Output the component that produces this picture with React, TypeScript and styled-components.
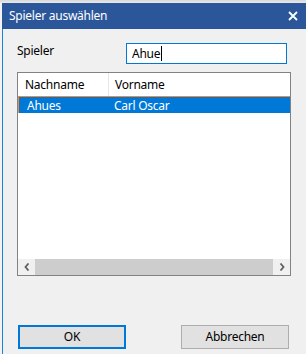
import React from "react";
import styled, { createGlobalStyle } from "styled-components";

const GlobalStyle = createGlobalStyle`
    html, body {
        margin: 0;
        padding: 0;
        background: #f3f3f3;
        overflow: hidden;
    }
    * {
        box-sizing: border-box;
    }
`;

const Screen = styled.div`
    width: 306px;
    height: 354px;
    background: linear-gradient(#d8d8d8, #e9e9e9 3px, #f3f3f3 3px);
    padding: 3px 0 0 2px;
    font-family: "Noto Sans", "Liberation Sans", sans-serif;
    font-size: 12px;
    letter-spacing: -0.25px;
    color: #000;
    overflow: hidden;
`;

const Window = styled.div`
    display: flex;
    flex-direction: column;
    height: 351px;
`;

const TitleBar = styled.div`
    height: 26px;
    flex: none;
    background: #2b579a;
    color: #fff;
    display: flex;
    align-items: center;
    justify-content: space-between;
    padding: 0 8px 1px 7px;
`;

const Title = styled.span`
    font-size: 12px;
`;

const Body = styled.div`
    flex: 1;
    background: #f0f0f0;
    border-left: 1px solid #1883d7;
    padding: 14px 0 0 14px;
    display: flex;
    flex-direction: column;
`;

const FieldRow = styled.div`
    display: flex;
    align-items: flex-start;
    height: 21px;
`;

const Label = styled.span`
    width: 109px;
    line-height: 16px;
`;

const Input = styled.div`
    width: 161px;
    height: 21px;
    border: 1px solid #0078d7;
    background: #fff;
    display: flex;
    align-items: center;
    padding-left: 5px;
    line-height: 16px;
`;

const Caret = styled.span`
    display: inline-block;
    width: 1px;
    height: 15px;
    background: #000;
    margin-left: 1px;
`;

const List = styled.div`
    margin-top: 8px;
    width: 274px;
    height: 204px;
    border: 1px solid #828282;
    background: #fff;
    display: flex;
    flex-direction: column;
`;

const HeaderRow = styled.div`
    display: flex;
    height: 23px;
    flex: none;
`;

const HeaderCell = styled.div<{ $w?: number; $divider?: boolean }>`
    width: ${(p) => (p.$w ? `${p.$w}px` : "auto")};
    flex: ${(p) => (p.$w ? "none" : "1")};
    display: flex;
    align-items: center;
    padding-left: ${(p) => (p.$divider ? 7 : 6)}px;
    border-right: ${(p) => (p.$divider ? "1px solid #e5e5e5" : "none")};
`;

const DataRow = styled.div<{ $selected?: boolean }>`
    display: flex;
    height: 17px;
    flex: none;
    background: ${(p) => (p.$selected ? "#0078d7" : "transparent")};
    color: ${(p) => (p.$selected ? "#fff" : "#000")};
    border: 1px solid ${(p) => (p.$selected ? "#ff8728" : "transparent")};
    border-right: none;
    border-bottom: none;
    align-items: center;
`;

const DataCell = styled.div<{ $w?: number; $pad: number }>`
    width: ${(p) => (p.$w ? `${p.$w}px` : "auto")};
    flex: ${(p) => (p.$w ? "none" : "1")};
    padding-left: ${(p) => p.$pad}px;
    line-height: 15px;
`;

const Filler = styled.div`
    flex: 1;
`;

const HScroll = styled.div`
    height: 16px;
    flex: none;
    display: flex;
    background: #f0f0f0;
`;

const ScrollButton = styled.div`
    width: 17px;
    display: flex;
    align-items: center;
    justify-content: center;
`;

const Thumb = styled.div`
    flex: 1;
    background: #cdcdcd;
`;

const ButtonRow = styled.div`
    margin-top: 49px;
    display: flex;
    width: 272px;
    justify-content: space-between;
    padding-left: 1px;
`;

const Button = styled.div<{ $default?: boolean }>`
    width: 108px;
    height: 24px;
    background: #e1e1e1;
    border: ${(p) => (p.$default ? "2px solid #0078d7" : "1px solid #adadad")};
    display: flex;
    align-items: center;
    justify-content: center;
    padding-bottom: 1px;
`;

const Chevron = ({ left }: { left?: boolean }) => (
    <svg width="6" height="8" viewBox="0 0 6 8">
        <path
            d={left ? "M4.5 0.5 L1.5 4 L4.5 7.5" : "M1.5 0.5 L4.5 4 L1.5 7.5"}
            fill="none"
            stroke="#606060"
            strokeWidth="1.8"
        />
    </svg>
);

const CloseIcon = () => (
    <svg width="10" height="10" viewBox="0 0 10 10">
        <path d="M1 1 L9 9 M9 1 L1 9" stroke="#fff" strokeWidth="1.8" />
    </svg>
);

const App = () => {
    return (
        <>
            <GlobalStyle />
            <Screen>
                <Window>
                    <TitleBar>
                        <Title>Spieler auswählen</Title>
                        <CloseIcon />
                    </TitleBar>
                    <Body>
                        <FieldRow>
                            <Label>Spieler</Label>
                            <Input>
                                Ahue
                                <Caret />
                            </Input>
                        </FieldRow>
                        <List>
                            <HeaderRow>
                                <HeaderCell $w={91} $divider>
                                    Nachname
                                </HeaderCell>
                                <HeaderCell>Vorname</HeaderCell>
                            </HeaderRow>
                            <DataRow $selected>
                                <DataCell $w={90} $pad={8}>
                                    Ahues
                                </DataCell>
                                <DataCell $pad={5}>Carl Oscar</DataCell>
                            </DataRow>
                            <Filler />
                            <HScroll>
                                <ScrollButton>
                                    <Chevron left />
                                </ScrollButton>
                                <Thumb />
                                <ScrollButton>
                                    <Chevron />
                                </ScrollButton>
                            </HScroll>
                        </List>
                        <ButtonRow>
                            <Button $default>OK</Button>
                            <Button>Abbrechen</Button>
                        </ButtonRow>
                    </Body>
                </Window>
            </Screen>
        </>
    );
};

export default App;
